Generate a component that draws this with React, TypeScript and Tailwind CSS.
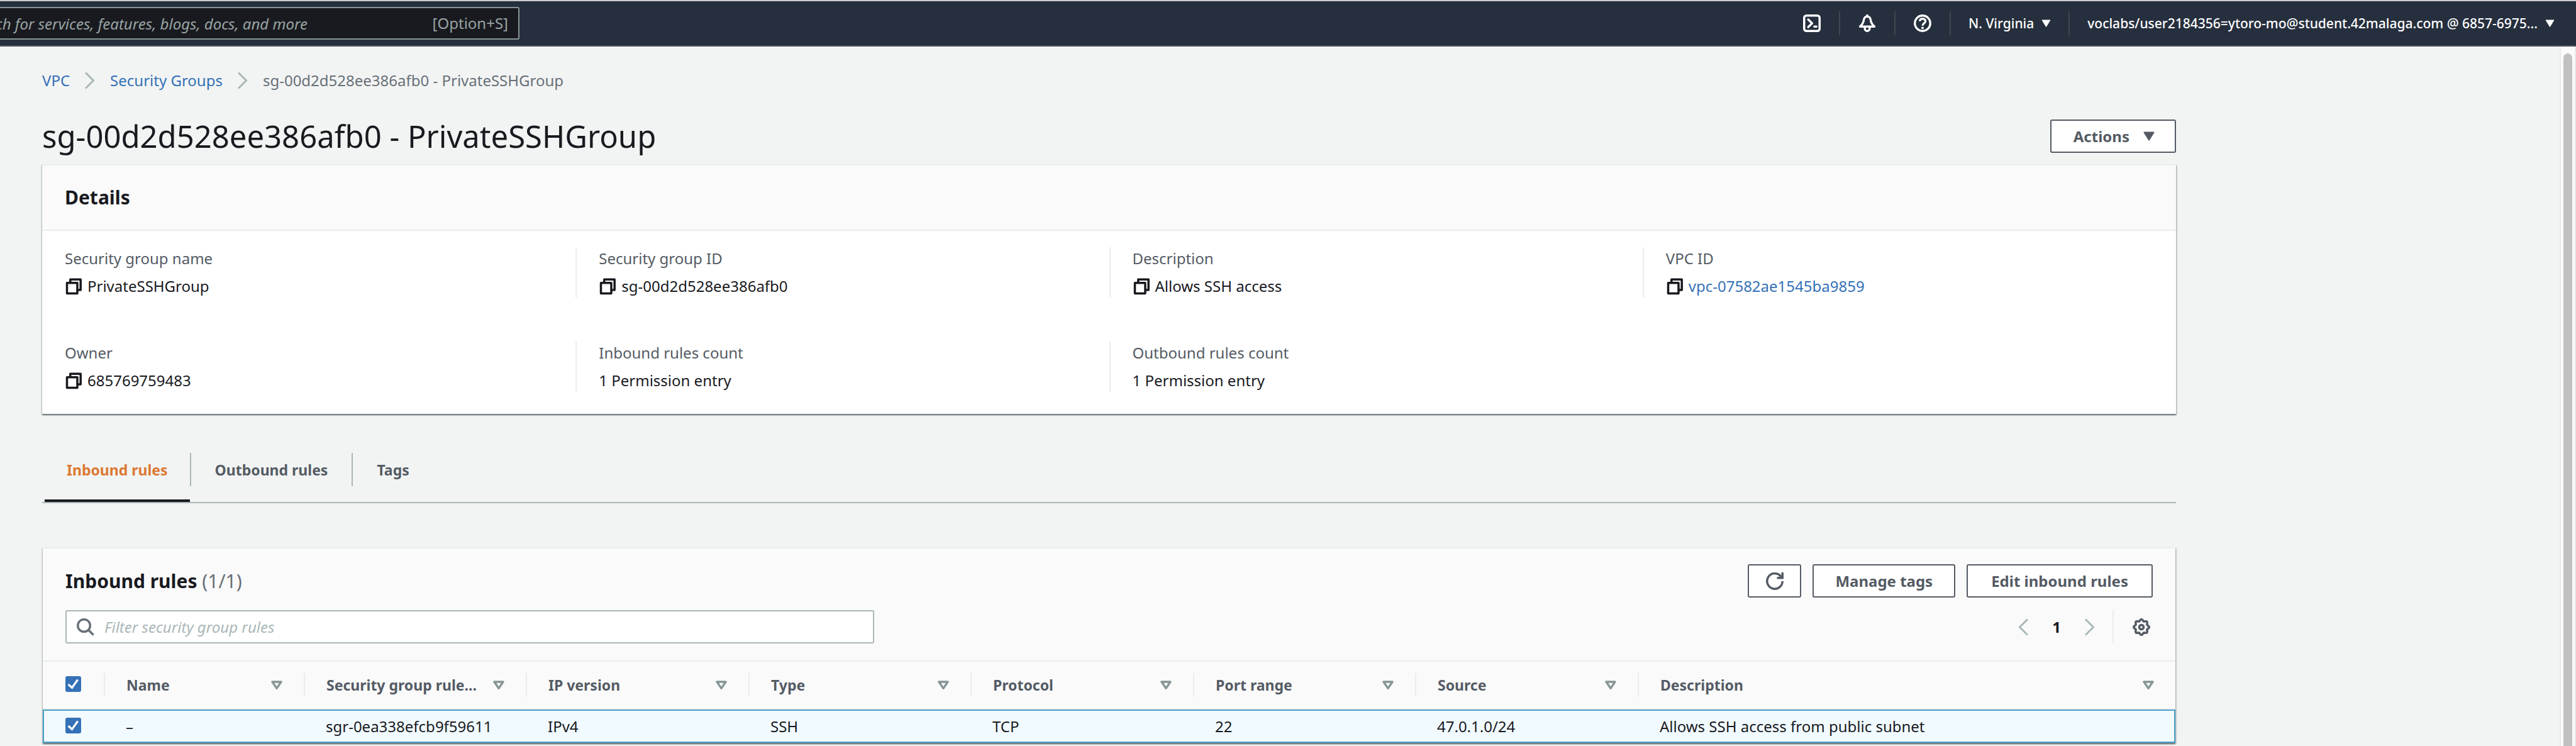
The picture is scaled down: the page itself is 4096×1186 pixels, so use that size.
import React from "react";

const FONT = "font-['Noto_Sans','Open_Sans',sans-serif]";

function Icon({ children, className = "size-7", sw = 2 }: { children: React.ReactNode; className?: string; sw?: number }) {
  return (
    <svg viewBox="0 0 16 16" className={`shrink-0 ${className}`} fill="none" stroke="currentColor" strokeWidth={sw} aria-hidden="true">
      {children}
    </svg>
  );
}

const CopyIcon = () => (
  <Icon sw={2}>
    <path d="M2 5h9.4v9.6H2z" strokeLinejoin="round" />
    <path d="M5 5V1.8h9.4v9.6h-3" strokeLinejoin="round" />
  </Icon>
);

const Chevron = ({ left = false }: { left?: boolean }) => (
  <svg viewBox="0 0 16 28" className="h-7 w-4 shrink-0 text-[#aab7b8]" fill="none" stroke="currentColor" strokeWidth={3} aria-hidden="true">
    <path d={left ? "M15 1.5 2.5 14 15 26.5" : "M1 1.5 13.5 14 1 26.5"} />
  </svg>
);

const Caret = ({ className }: { className: string }) => (
  <svg viewBox="0 0 18 15" className={`shrink-0 ${className}`} fill="currentColor" stroke="currentColor" strokeWidth={2} strokeLinejoin="round" aria-hidden="true">
    <path d="M1.5 1.5h15L9 13.5z" />
  </svg>
);

const SortIcon = () => (
  <svg viewBox="0 0 18 15" className="h-[15px] w-[18px] shrink-0 text-[#879596]" fill="none" stroke="currentColor" strokeWidth={3.4} strokeLinejoin="round" aria-hidden="true">
    <path d="M2 2h14L9 12.4z" />
  </svg>
);

const gearPath =
  Array.from({ length: 96 }, (_, i) => {
    const a = (i / 96) * Math.PI * 2;
    const r = 6.3 + 0.75 * Math.cos(8 * a);
    return `${i ? "L" : "M"}${(8 + r * Math.cos(a)).toFixed(2)} ${(8 + r * Math.sin(a)).toFixed(2)}`;
  }).join("") + "Z";

function Tick({ label }: { label: string }) {
  return (
    <label className="relative block size-[25px]">
      <input type="checkbox" defaultChecked aria-label={label} className="peer block size-[25px] appearance-none rounded-[3px] border-2 border-[#879596] bg-white checked:border-[#3471b7] checked:bg-[#3471b7]" />
      <svg viewBox="0 0 28 28" className="pointer-events-none absolute inset-0 hidden size-[25px] peer-checked:block" fill="none" stroke="#fff" strokeWidth={3.6} aria-hidden="true">
        <path d="M5.2 14.5 11.8 20.6 22 6.2" />
      </svg>
    </label>
  );
}

function NavCell({ label, children }: { label: string; children: React.ReactNode }) {
  return (
    <button type="button" aria-label={label} className="flex h-[38px] w-[88px] items-center justify-center border-r-2 border-[#414750]">
      {children}
    </button>
  );
}

function TopNav() {
  return (
    <header className="flex h-[74px] items-center justify-between overflow-hidden border-t-2 border-b-2 border-t-[#cbcbce] border-b-[#4d545e] bg-[#262f3e] text-white">
      <div className="-ml-14 flex h-[52px] w-[882px] items-center rounded-[3px] border-2 border-[#879596] bg-[#191a1f] pr-4">
        <input
          type="search"
          aria-label="Search"
          placeholder="Search for services, features, blogs, docs, and more"
          className="h-full min-w-0 flex-1 bg-transparent text-[24px] italic outline-none placeholder:text-[#98a4a4]"
        />
        <span className="text-[24px] text-[#98a4a4]">[Option+S]</span>
      </div>
      <nav className="flex items-center pr-[34px] text-[21px] font-medium">
        <NavCell label="CloudShell">
          <Icon>
            <rect x="1" y="1" width="14" height="14" rx="2" />
            <path d="M4.7 4.6 8.2 8l-3.5 3.4" strokeLinecap="round" strokeLinejoin="round" />
            <path d="M10.2 11h1.9" strokeLinecap="round" />
          </Icon>
        </NavCell>
        <NavCell label="Notifications">
          <Icon sw={1.9}>
            <path d="M8 1.6C6.1 1.9 5 3.4 4.8 5.4 4.5 7.9 3.6 9 1.4 11h13.2c-2.2-2-3.1-3.1-3.4-5.6C11 3.4 9.9 1.9 8 1.6z" strokeLinejoin="round" />
            <path d="M8 .2v2" strokeLinecap="round" />
            <path d="M5.8 11v1.8a2.2 2.2 0 0 0 4.4 0V11" />
          </Icon>
        </NavCell>
        <NavCell label="Help">
          <Icon sw={1.9}>
            <circle cx="8" cy="8" r="7" />
            <path d="M5.5 6.2C5.5 4.7 6.6 3.9 8 3.9s2.6.8 2.6 2.2c0 1.9-2.6 1.9-2.6 4" />
            <path d="M7 12.2h2" />
          </Icon>
        </NavCell>
        <button type="button" className="flex h-[38px] items-center gap-3 border-r-2 border-[#414750] px-7">
          N. Virginia
          <Caret className="h-3 w-[15px]" />
        </button>
        <button type="button" className="flex h-[38px] items-center gap-3 pl-7">
          voclabs/user2184356=ytoro-mo@student.42malaga.com @ 6857-6975...
          <Caret className="h-3 w-[15px]" />
        </button>
      </nav>
    </header>
  );
}

type Detail = { label: string; value: string; copy?: boolean; link?: boolean };
const detailRows: Detail[][] = [
  [
    { label: "Security group name", value: "PrivateSSHGroup", copy: true },
    { label: "Security group ID", value: "sg-00d2d528ee386afb0", copy: true },
    { label: "Description", value: "Allows SSH access", copy: true },
    { label: "VPC ID", value: "vpc-07582ae1545ba9859", copy: true, link: true },
  ],
  [
    { label: "Owner", value: "685769759483", copy: true },
    { label: "Inbound rules count", value: "1 Permission entry" },
    { label: "Outbound rules count", value: "1 Permission entry" },
  ],
];

const CARD = "border-t-2 border-[#eaeded] shadow-[0_2px_2px_0_rgba(0,28,36,0.45),2px_2px_2px_0_rgba(0,28,36,0.15),-1px_2px_2px_0_rgba(0,28,36,0.15)]";
const BUTTON = "flex h-[53px] items-center justify-center rounded-[3px] border-2 border-[#545b64] bg-white text-[24px] font-bold text-[#545b64]";

function Details() {
  return (
    <section className={`bg-white ${CARD}`}>
      <h2 className="flex h-[104px] items-center border-b-2 border-[#eaeded] bg-[#fafafa] px-9 text-[30px] font-bold">Details</h2>
      <div className="flex flex-col gap-[70px] pt-[26px] pb-[35px]">
        {detailRows.map((row) => (
          <dl key={row[0].label} className="grid grid-cols-4">
            {row.map((d, i) => (
              <div key={d.label} className={`flex flex-col gap-2 leading-9 ${i ? "border-l-2 border-[#eaeded] pl-[35px]" : "pl-9"}`}>
                <dt className="text-[#545b64]">{d.label}</dt>
                <dd className="flex items-center gap-2">
                  {d.copy && (
                    <button type="button" aria-label={`Copy ${d.label}`}>
                      <CopyIcon />
                    </button>
                  )}
                  {d.link ? (
                    <a href="#vpc" className="text-[#3471b7]">
                      {d.value}
                    </a>
                  ) : (
                    d.value
                  )}
                </dd>
              </div>
            ))}
          </dl>
        ))}
      </div>
    </section>
  );
}

function Tabs() {
  const tab = "relative flex h-[53px] items-center text-[23px] font-bold";
  return (
    <div role="tablist" className="mt-[62px] flex h-20 items-start border-b-2 border-[#aab7b8] pl-1 text-[#545b64]">
      <button role="tab" aria-selected="true" type="button" className={`${tab} border-r-2 border-[#aab7b8] px-[35px] text-[#dc7832]`}>
        Inbound rules
        <span className="absolute -bottom-[25px] left-0 h-1 w-full bg-[#191a1f]" />
      </button>
      <button role="tab" aria-selected="false" type="button" className={`${tab} border-r-2 border-[#aab7b8] px-[38px]`}>
        Outbound rules
      </button>
      <button role="tab" aria-selected="false" type="button" className={`${tab} px-[38px]`}>
        Tags
      </button>
    </div>
  );
}

const columns = [
  { name: "Name", width: "w-[318px]" },
  { name: "Security group rule...", width: "w-[353px]" },
  { name: "IP version", width: "w-[354px]" },
  { name: "Type", width: "w-[353px]" },
  { name: "Protocol", width: "w-[354px]" },
  { name: "Port range", width: "w-[353px]" },
  { name: "Source", width: "w-[354px]" },
  { name: "Description", width: "" },
];
const cells = ["–", "sgr-0ea338efcb9f59611", "IPv4", "SSH", "TCP", "22", "47.0.1.0/24", "Allows SSH access from public subnet"];

function RulesTable() {
  return (
    <table className="w-full table-fixed border-separate border-spacing-0 text-left">
      <colgroup>
        <col className="w-[97px]" />
        {columns.map((c) => (
          <col key={c.name} className={c.width} />
        ))}
      </colgroup>
      <thead>
        <tr>
          <th scope="col" className="h-[76px] border-b-2 border-[#eaeded] pb-1 pl-9">
            <Tick label="Select all rules" />
          </th>
          {columns.map((c) => (
            <th key={c.name} scope="col" className="h-[76px] border-b-2 border-[#eaeded] text-[23px] font-bold text-[#545b64]">
              <button type="button" className="flex h-[38px] w-full items-center justify-between border-l-2 border-[#eaeded] pr-[34px] pl-[34px] text-left">
                {c.name}
                <SortIcon />
              </button>
            </th>
          ))}
        </tr>
      </thead>
      <tbody>
        <tr>
          <td className="h-[53px] border-2 border-r-0 border-[#4b9fc7] bg-[#f1faff] pb-0.5 pl-[34px]">
            <Tick label="Select rule sgr-0ea338efcb9f59611" />
          </td>
          {cells.map((c, i) => (
            <td key={columns[i].name} className="h-[53px] border-y-2 border-[#4b9fc7] bg-[#f1faff] pl-[35px] last:border-r-2">
              {c}
            </td>
          ))}
        </tr>
      </tbody>
    </table>
  );
}

function Rules() {
  return (
    <section className={`mx-px mt-[70px] bg-[#fafafa] ${CARD}`}>
      <div className="flex flex-col gap-5 border-b-2 border-[#eaeded] px-9 pt-[25px] pb-[27px]">
        <div className="flex items-center justify-between">
          <h2 className="text-[30px] font-bold">
            Inbound rules <span className="font-normal text-[#687078]">(1/1)</span>
          </h2>
          <div className="flex gap-[18px]">
            <button type="button" aria-label="Refresh" className={`${BUTTON} w-[85px]`}>
              <Icon>
                <path d="M15 8a7 7 0 1 1-.9-3.5" />
                <path d="M15 0v5h-5" />
              </Icon>
            </button>
            <button type="button" className={`${BUTTON} px-[34px]`}>Manage tags</button>
            <button type="button" className={`${BUTTON} px-[37px]`}>Edit inbound rules</button>
          </div>
        </div>
        <div className="flex items-center justify-between">
          <label className="flex h-[53px] w-[1286px] items-center gap-4 rounded-[3px] border-2 border-[#aab7b8] bg-white px-4 text-[#687078]">
            <Icon sw={2}>
              <circle cx="6.6" cy="6.6" r="5.6" />
              <path d="m10.6 10.6 4.6 4.6" />
            </Icon>
            <input type="search" aria-label="Filter security group rules" placeholder="Filter security group rules" className="h-full flex-1 italic outline-none placeholder:text-[#aab7b8]" />
          </label>
          <div className="flex items-center pr-1">
            <button type="button" aria-label="Previous page"><Chevron left /></button>
            <button type="button" className="w-[90px] text-center font-bold">1</button>
            <button type="button" aria-label="Next page"><Chevron /></button>
            <button type="button" aria-label="Preferences" className="ml-7 flex h-[53px] items-center border-l-2 border-[#eaeded] pl-[30px] text-[#545b64]">
              <Icon>
                <path d={gearPath} strokeLinejoin="round" />
                <circle cx="8" cy="8" r="2" />
              </Icon>
            </button>
          </div>
        </div>
      </div>
      <RulesTable />
    </section>
  );
}

export default function App() {
  return (
    <div className={`flex min-h-screen flex-col bg-[#f2f4f3] text-[24px] leading-9 text-[#191a1f] ${FONT}`}>
      <TopNav />
      <div className="flex flex-1">
        <main className="min-w-0 flex-1 pr-[610px] pb-[6px] pl-[67px]">
          <nav aria-label="Breadcrumb" className="flex items-center gap-6 pt-[36px] text-[24px]">
            <a href="#vpc" className="text-[#3471b7]">VPC</a>
            <Chevron />
            <a href="#groups" className="text-[#3471b7]">Security Groups</a>
            <Chevron />
            <span className="text-[#687078]">sg-00d2d528ee386afb0 - PrivateSSHGroup</span>
          </nav>
          <div className="mt-[44px] mb-[18px] flex items-center justify-between">
            <h1 className="text-[49px] leading-[53px]">sg-00d2d528ee386afb0 - PrivateSSHGroup</h1>
            <button type="button" className={`${BUTTON} gap-[22px] pr-8 pl-[35px]`}>
              Actions
              <Caret className="h-[15px] w-[18px]" />
            </button>
          </div>
          <Details />
          <Tabs />
          <Rules />
        </main>
        <div aria-hidden="true" className="flex w-[26px] flex-col items-center border-x-2 border-[#e9eaea] bg-[#fafafa] pt-[11px]">
          <div className="w-[14px] flex-1 rounded-t-full bg-[#c1c1c1]" />
        </div>
      </div>
    </div>
  );
}
